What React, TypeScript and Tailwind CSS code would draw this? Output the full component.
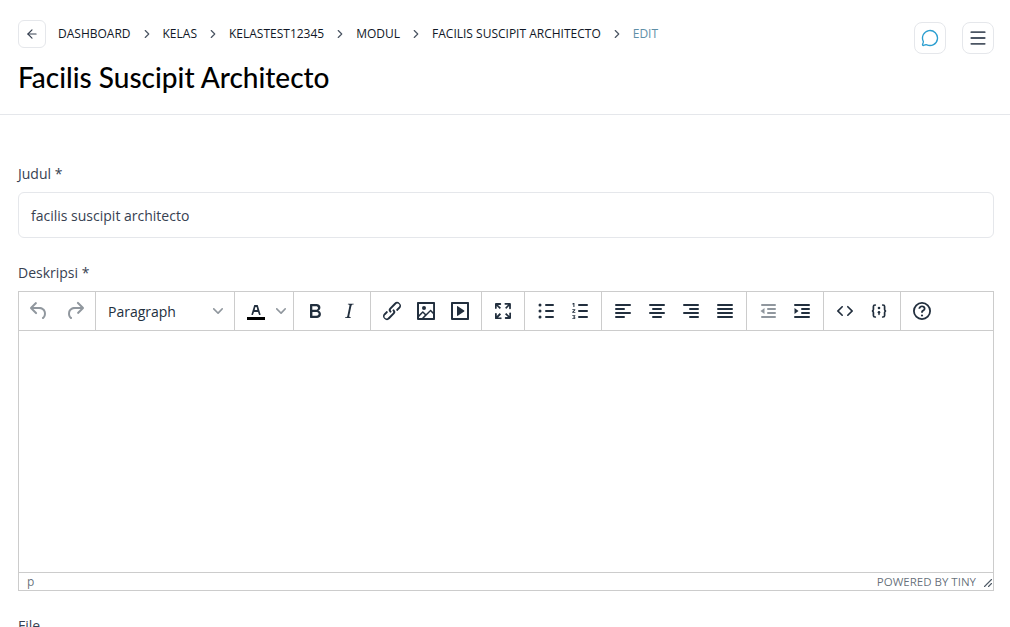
import { ArrowLeft, ChevronRight, Menu, MessageCircle } from "lucide-react";
import type { ReactNode } from "react";

const crumbs = ["Dashboard", "Kelas", "Kelastest12345", "Modul", "Facilis Suscipit Architecto"];

const Icon = ({ children, muted }: { children: ReactNode; muted?: boolean }) => (
  <div className="flex h-[38px] w-[34px] shrink-0 items-center justify-center">
    <svg
      width="24"
      height="24"
      viewBox="0 0 24 24"
      className={muted ? "fill-[#222f3e]/50" : "fill-[#222f3e]"}
      fillRule="evenodd"
    >
      {children}
    </svg>
  </div>
);

const Group = ({ children }: { children: ReactNode }) => (
  <div className="flex h-[38px] shrink-0 border-r border-[#ccc] px-1">{children}</div>
);

const Caret = () => (
  <svg width="10" height="10" viewBox="0 0 10 10" className="fill-[#222f3e]/50">
    <path d="M8.7 2.2c.3-.3.8-.3 1 0 .4.4.4.9 0 1.2L5.7 7.8c-.3.3-.9.3-1.2 0L.2 3.4a.8.8 0 0 1 0-1.2c.3-.3.8-.3 1.1 0L5 6l3.7-3.8Z" />
  </svg>
);

const Bars = ({ rows }: { rows: [number, number][] }) => (
  <>
    {rows.map(([x, w], i) => (
      <rect key={i} x={x} y={5 + i * 4} width={w} height="2" rx="1" />
    ))}
  </>
);

const Toolbar = () => (
  <div className="flex h-[39px] border-b border-[#ccc]">
    <div className="flex h-[38px] w-[77px] shrink-0 gap-[2px] border-r border-[#ccc] px-[3px]">
      <Icon muted>
        <path d="M6.4 8H12c3.7 0 6.2 2 6.8 5.1.6 2.7-.4 5.6-2.3 6.8a1 1 0 0 1-1-1.8c1.1-.6 1.8-2.7 1.4-4.6-.5-2.1-2.1-3.5-4.9-3.5H6.4l3.3 3.3a1 1 0 1 1-1.4 1.4l-5-5a1 1 0 0 1 0-1.4l5-5a1 1 0 0 1 1.4 1.4L6.4 8Z" />
      </Icon>
      <Icon muted>
        <path d="M17.6 10H12c-2.8 0-4.4 1.4-4.9 3.5-.4 2 .3 4 1.4 4.6a1 1 0 1 1-1 1.8c-2-1.2-2.9-4.1-2.3-6.8.6-3 3-5.1 6.8-5.1h5.6l-3.3-3.3a1 1 0 1 1 1.4-1.4l5 5a1 1 0 0 1 0 1.4l-5 5a1 1 0 0 1-1.4-1.4l3.3-3.3Z" />
      </Icon>
    </div>
    <div className="flex h-[38px] w-[139px] shrink-0 items-center justify-between border-r border-[#ccc] pl-3 pr-[11px]">
      <span className="pt-[2px] text-sm text-[#222f3e]">Paragraph</span>
      <Caret />
    </div>
    <div className="flex h-[38px] w-[59px] shrink-0 items-center border-r border-[#ccc] pl-[9px]">
      <svg width="24" height="24" viewBox="0 0 24 24" className="fill-[#222f3e]" fillRule="evenodd">
        <path d="M8.7 16h-.8a.5.5 0 0 1-.5-.6l2.7-9c.1-.3.3-.4.5-.4h2.8c.2 0 .4.1.5.4l2.7 9a.5.5 0 0 1-.5.6h-.8a.5.5 0 0 1-.4-.4l-.7-2.2c0-.3-.3-.4-.5-.4h-3.4c-.2 0-.4.1-.5.4l-.7 2.2c0 .3-.2.4-.4.4Zm2.6-7.6-.6 2a.5.5 0 0 0 .5.6h1.6a.5.5 0 0 0 .5-.6l-.6-2c0-.3-.3-.4-.5-.4h-.4c-.2 0-.4.1-.5.4Z" />
        <path d="M3 18h18v3H3z" className="fill-black" />
      </svg>
      <span className="ml-2">
        <Caret />
      </span>
    </div>
    <Group>
      <Icon>
        <path d="M7.8 19c-.3 0-.5 0-.6-.2l-.2-.5V5.7c0-.2 0-.4.2-.5l.6-.2h5c1.5 0 2.7.3 3.5 1 .7.6 1.1 1.4 1.1 2.5a3 3 0 0 1-.6 1.9c-.4.6-1 1-1.6 1.2.4.1.9.3 1.3.6s.8.7 1 1.2c.3.4.4 1 .4 1.6 0 1.3-.4 2.3-1.3 3-.8.7-2 1-3.6 1H7.8Zm5-8.3c.6 0 1.2-.1 1.6-.5.4-.3.6-.7.6-1.3 0-1.1-.8-1.7-2.3-1.7H9.3v3.5h3.4Zm.5 6c.7 0 1.3-.1 1.7-.4.4-.4.6-.9.6-1.5s-.2-1-.7-1.4c-.4-.3-1-.4-2-.4H9.4v3.8h4Z" />
      </Icon>
      <Icon>
        <path d="M16.7 4.7l-.1.9h-.3c-.6 0-1 0-1.4.3-.3.3-.4.6-.5 1.1l-2.1 9.8v.6c0 .5.4.8 1.4.8h.2l-.2.8H8l.2-.8h.2c1.1 0 1.8-.5 2-1.5l2-9.8.1-.5c0-.6-.4-.8-1.4-.8h-.3l.2-.9h5.8Z" />
      </Icon>
    </Group>
    <Group>
      <Icon>
        <path d="M6.2 12.3a1 1 0 0 1 1.4 1.4l-2 2a2 2 0 1 0 2.6 2.8l4.8-4.8a1 1 0 0 0 0-1.4 1 1 0 1 1 1.4-1.3 2.9 2.9 0 0 1 0 4L9.6 20a3.9 3.9 0 0 1-5.5-5.5l2-2Zm11.6-.6a1 1 0 0 1-1.4-1.4l2-2a2 2 0 1 0-2.6-2.8L11 10.3a1 1 0 0 0 0 1.4A1 1 0 1 1 9.6 13a2.9 2.9 0 0 1 0-4L14.4 4a3.9 3.9 0 0 1 5.5 5.5l-2 2Z" />
      </Icon>
      <Icon>
        <path d="m5 15.7 3.3-3.2c.3-.3.7-.3 1 0L12 15l4.1-4c.3-.4.8-.4 1 0l2 1.9V5H5v10.7ZM5 18V19h3l2.8-2.9-2-2L5 17.9Zm14-3-2.5-2.4-6.4 6.5H19v-4ZM4 3h16c.6 0 1 .4 1 1v16c0 .6-.4 1-1 1H4a1 1 0 0 1-1-1V4c0-.6.4-1 1-1Zm6 8a2 2 0 1 0 0-4 2 2 0 0 0 0 4Z" />
      </Icon>
      <Icon>
        <path d="M4 3h16c.6 0 1 .4 1 1v16c0 .6-.4 1-1 1H4a1 1 0 0 1-1-1V4c0-.6.4-1 1-1Zm1 2v14h14V5H5Zm4 2.6c0-.4.4-.6.8-.4l6.4 4.4c.3.2.3.6 0 .8l-6.4 4.4c-.4.2-.8 0-.8-.4V7.6Z" />
      </Icon>
    </Group>
    <Group>
      <Icon>
        <path d="m15.3 10-1.2-1.3 2.9-3h-2.3a.9.9 0 1 1 0-1.7H19c.5 0 .9.4.9.9v4.4a.9.9 0 1 1-1.8 0V7l-2.9 3Zm0 4 3 3v-2.3a.9.9 0 1 1 1.7 0V19c0 .5-.4.9-.9.9h-4.4a.9.9 0 1 1 0-1.8H17l-3-2.9 1.3-1.2ZM10 15.4l-2.9 3h2.3a.9.9 0 1 1 0 1.7H5a.9.9 0 0 1-1-.9v-4.4a.9.9 0 1 1 1.8 0V17l2.9-3 1.2 1.3ZM8.7 10 5.7 7v2.3a.9.9 0 0 1-1.7 0V5c0-.5.4-.9.9-.9h4.4a.9.9 0 0 1 0 1.8H7l3 2.9-1.3 1.2Z" />
      </Icon>
    </Group>
    <Group>
      <Icon>
        <rect x="11" y="5" width="9" height="2" rx="1" />
        <rect x="11" y="11" width="9" height="2" rx="1" />
        <rect x="11" y="17" width="9" height="2" rx="1" />
        <circle cx="6" cy="6" r="1.5" />
        <circle cx="6" cy="12" r="1.5" />
        <circle cx="6" cy="18" r="1.5" />
      </Icon>
      <Icon>
        <rect x="10" y="5" width="10" height="2" rx="1" />
        <rect x="10" y="11" width="10" height="2" rx="1" />
        <rect x="10" y="17" width="10" height="2" rx="1" />
        <path d="M5.4 4h1v4h-1V5.2l-1 .2V4.6l1-.6ZM4.3 10.2h3v.9L5.7 12.9h1.7v.9H4.2v-.8l1.9-2H4.3v-.8ZM4.3 16.2h3v.7l-1 1c.7.1 1.1.5 1.1 1 0 .7-.6 1.1-1.6 1.1-.5 0-1-.1-1.5-.3v-.8c.5.2.9.3 1.4.3.5 0 .7-.1.7-.3s-.3-.4-.8-.4h-.5v-.6l1-1h-1.800v-.7Z" />
      </Icon>
    </Group>
    <Group>
      <Icon>
        <Bars rows={[[4, 16], [4, 10], [4, 16], [4, 10]]} />
      </Icon>
      <Icon>
        <Bars rows={[[4, 16], [7, 10], [4, 16], [7, 10]]} />
      </Icon>
      <Icon>
        <Bars rows={[[4, 16], [10, 10], [4, 16], [10, 10]]} />
      </Icon>
      <Icon>
        <Bars rows={[[4, 16], [4, 16], [4, 16], [4, 16]]} />
      </Icon>
    </Group>
    <Group>
      <Icon muted>
        <rect x="5" y="5" width="15" height="2" rx="1" />
        <rect x="11" y="9" width="9" height="2" rx="1" />
        <rect x="11" y="13" width="9" height="2" rx="1" />
        <rect x="5" y="17" width="15" height="2" rx="1" />
        <path d="m8.500 9-4 3 4 3V9Z" />
      </Icon>
      <Icon>
        <rect x="4" y="5" width="16" height="2" rx="1" />
        <rect x="11" y="9" width="9" height="2" rx="1" />
        <rect x="11" y="13" width="9" height="2" rx="1" />
        <rect x="4" y="17" width="16" height="2" rx="1" />
        <path d="m4.500 9 4 3-4 3V9Z" />
      </Icon>
    </Group>
    <Group>
      <Icon>
        <path d="M9.800 15.700c.3.3.3.8 0 1-.3.4-.9.4-1.200 0l-4.400-4.100a.8.8 0 0 1 0-1.200l4.400-4.200c.3-.3.9-.3 1.200 0 .3.3.3.8 0 1.100L6 12l3.800 3.700ZM14.200 15.700c-.3.3-.3.8 0 1 .4.400.9.400 1.200 0l4.400-4.100c.3-.3.3-.9 0-1.200l-4.400-4.200a.8.8 0 0 0-1.200 0c-.3.300-.3.800 0 1.100L18 12l-3.800 3.700Z" />
      </Icon>
      <Icon>
        <g fill="none" stroke="#222f3e" strokeWidth="1.700" strokeLinecap="round">
          <path d="M8.300 6H8C6.900 6 6.400 6.500 6.400 7.500v3c0 .8-.4 1.300-1.400 1.500 1 .2 1.400.7 1.400 1.500v3c0 1 .5 1.500 1.600 1.500h.3" />
          <path d="M15.700 6h.3c1.100 0 1.600.5 1.600 1.500v3c0 .8.400 1.300 1.400 1.500-1 .2-1.400.7-1.400 1.500v3c0 1-.5 1.500-1.600 1.500h-.3" />
          <path d="M12 13.500v2" strokeWidth="1.400" />
        </g>
        <circle cx="12" cy="9" r="1.300" />
        <circle cx="12" cy="13.300" r="1.300" />
      </Icon>
    </Group>
    <div className="flex h-[38px] px-1">
      <Icon>
        <path d="M12 4a8 8 0 1 1 0 16 8 8 0 0 1 0-16Zm0-2a10 10 0 1 0 0 20 10 10 0 0 0 0-20Z" transform="translate(1.200 1.200) scale(.9)" />
        <path d="M12 6.500c2 0 3.500 1.300 3.500 3 0 1.300-.7 2.100-1.700 2.700-.7.400-.9.700-.9 1.300v.2h-1.800v-.4c0-1.100.5-1.800 1.600-2.500.7-.4 1-.8 1-1.300 0-.7-.7-1.300-1.700-1.300s-1.700.6-1.800 1.500H8.400c.1-1.900 1.600-3.200 3.600-3.200Z" />
        <circle cx="12" cy="16.500" r="1.100" />
      </Icon>
    </div>
  </div>
);

const App = () => {
  return (
    <div className="h-[627px] overflow-hidden bg-white font-['Open_Sans',sans-serif] text-sm text-[#1f2937]">
      <header className="flex h-[115px] justify-between border-b border-[#e5e7eb] pl-[18px] pr-4 pt-5">
        <div>
          <nav className="flex h-7 items-center text-xs uppercase">
            <button className="mr-3 flex size-7 items-center justify-center rounded-md border border-[#e5e7eb]">
              <ArrowLeft size={14} strokeWidth={2} className="text-[#374151]" />
            </button>
            {crumbs.map((c) => (
              <div key={c} className="flex items-center">
                <span className="text-[#111827]">{c}</span>
                <ChevronRight size={14} strokeWidth={2} className="mx-[9px] text-[#4b5563]" />
              </div>
            ))}
            <span className="text-[#5f8fa8]">Edit</span>
          </nav>
          <h1 className="mt-[11px] font-['Lato',sans-serif] text-[28px] leading-9 font-medium text-black">
            Facilis Suscipit Architecto
          </h1>
        </div>
        <div className="mt-[2px] flex gap-4">
          <button className="flex size-8 items-center justify-center rounded-lg border border-[#e5e7eb]">
            <MessageCircle size={18} strokeWidth={1.8} className="-mt-px text-[#2b9ed0]" />
          </button>
          <button className="flex size-8 items-center justify-center rounded-lg border border-[#e5e7eb]">
            <Menu size={20} strokeWidth={2.2} className="text-[#4b5563]" />
          </button>
        </div>
      </header>

      <main className="pl-[18px] pr-4 pt-[49px]">
        <label className="mb-2 block leading-5 text-[#374151]">Judul *</label>
        <div className="flex h-[46px] items-center rounded-md border border-[#e5e7eb] px-3 pt-[2px] text-[#374151]">
          facilis suscipit architecto
        </div>

        <label className="mb-2 mt-[25px] block leading-5 text-[#374151]">Deskripsi *</label>
        <div className="flex h-[300px] flex-col border border-[#ccc]">
          <Toolbar />
          <div className="flex-1" />
          <div className="flex h-[18px] items-center justify-between border-t border-[#ccc] pl-2 text-xs text-[#222f3e]/70">
            <span className="pt-px">p</span>
            <div className="flex items-center gap-[7px]">
              <span className="pt-px text-[11.5px]">POWERED BY TINY</span>
              <svg width="10" height="10" viewBox="0 0 10 10" className="mt-1 fill-[#222f3e]/80">
                <path d="M8.100 1.100A.5.5 0 1 1 8.900 1.900L1.900 8.900A.5.5 0 1 1 1.100 8.100L8.100 1.100ZM8.100 5.100A.5.5 0 1 1 8.900 5.900L5.900 8.900A.5.5 0 1 1 5.100 8.100L8.100 5.100Z" />
              </svg>
            </div>
          </div>
        </div>

        <label className="mt-[25px] block leading-5 text-[#374151]">File</label>
      </main>
    </div>
  );
};

export default App;
